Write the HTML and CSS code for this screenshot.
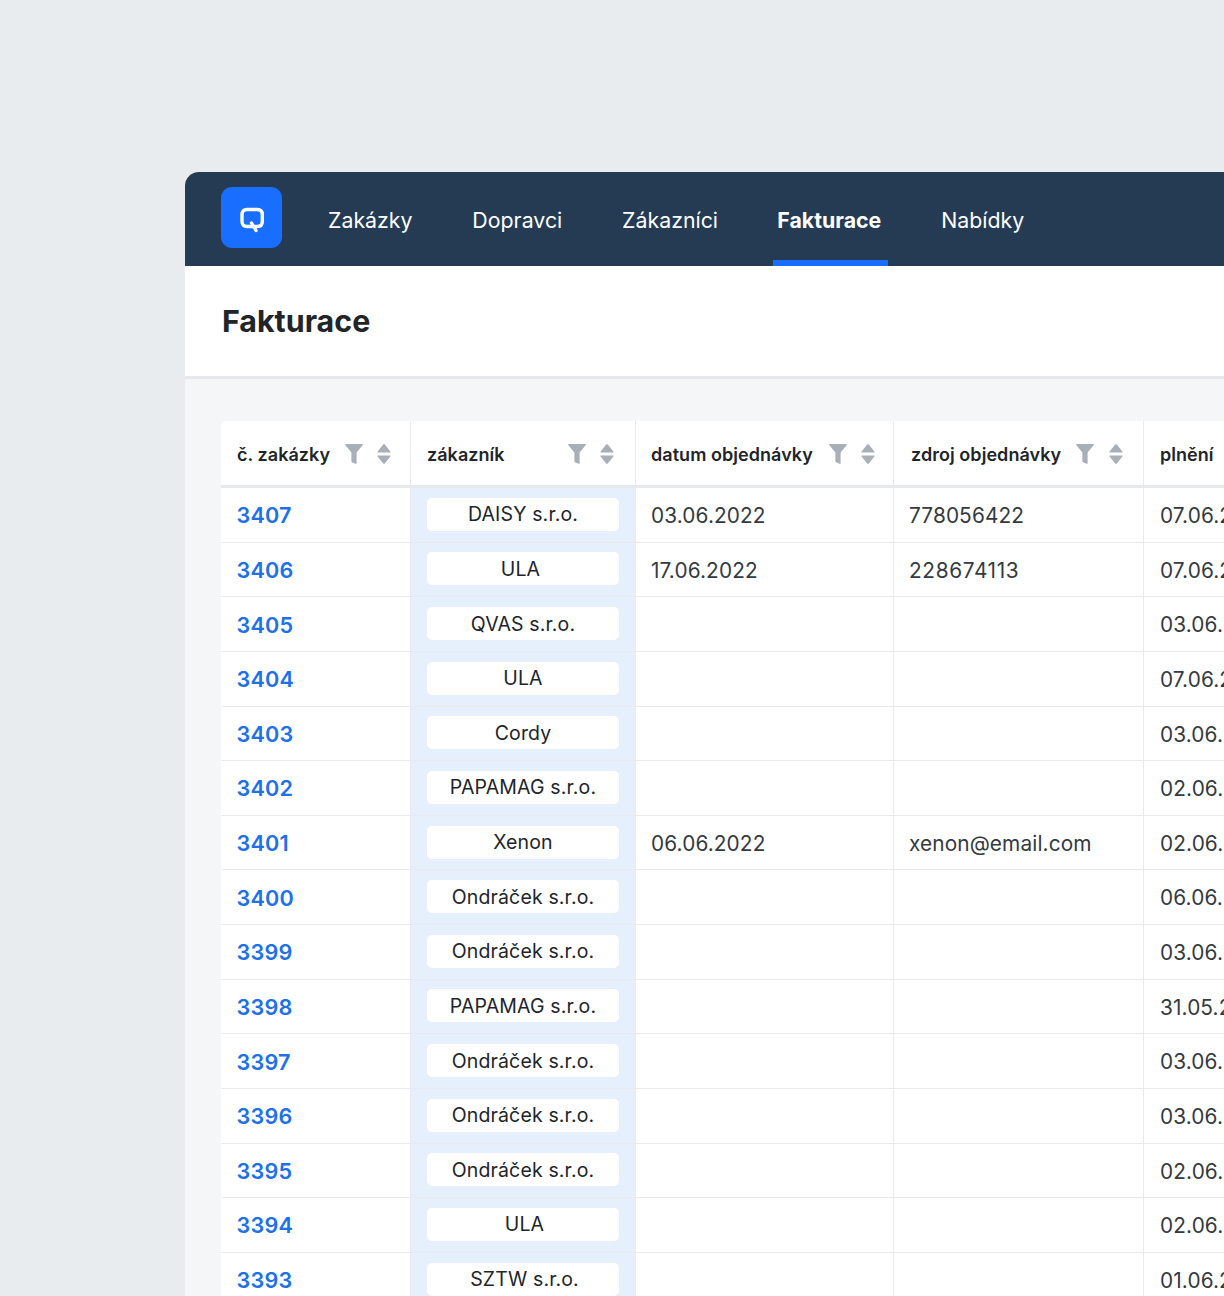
FILE: index.html
```html
<!DOCTYPE html>
<html lang="cs">
<head>
<meta charset="utf-8">
<title>Fakturace</title>
<link rel="stylesheet" href="styles.css">
</head>
<body>
<svg class="defs" width="0" height="0" aria-hidden="true">
  <symbol id="funnel" viewBox="0 0 18 20"><path d="M0.6 0H17.4C17.9 0 18.1 .5 17.8 .9L11.6 8.4V19.2C11.6 19.8 11.1 20 10.6 19.8L7 18.2C6.6 18 6.4 17.7 6.4 17.3V8.4L.2 .9C-.1 .5.1 0 .6 0Z"/></symbol>
  <symbol id="sort" viewBox="0 0 14 20"><path d="M6.2.5C6.6 0 7.4 0 7.8.5L13.4 7.4C13.8 7.9 13.5 8.5 12.9 8.5H1.1C.5 8.5.2 7.9.6 7.4Z"/><path d="M6.2 19.5C6.6 20 7.4 20 7.8 19.5L13.4 12.6C13.8 12.1 13.5 11.5 12.9 11.5H1.1C.5 11.5.2 12.1.6 12.6Z"/></symbol>
</svg>
<div class="shell">
  <nav class="nav">
    <div class="logo">
      <svg width="30" height="30" viewBox="0 0 30 30" fill="none" stroke="#fff" stroke-width="3.4" stroke-linejoin="round" stroke-linecap="round"><path d="M10 6.500H20.300C23.500 6.500 25.300 8.300 25.300 11.500V18.500C25.300 21.700 23.500 23.500 20.300 23.500H10C6.800 23.500 5 21.700 5 18.500V11.500C5 8.300 6.800 6.500 10 6.500Z"/><path d="M14.500 20L19 27.500"/></svg>
    </div>
    <a class="nav-item">Zakázky</a>
    <a class="nav-item">Dopravci</a>
    <a class="nav-item">Zákazníci</a>
    <a class="nav-item active">Fakturace</a>
    <a class="nav-item">Nabídky</a>
  </nav>
  <header class="page-head"><h1>Fakturace</h1></header>
  <main class="content">
    <div class="table">
      <div class="row head">
        <div class="cell c1"><span>č. zakázky</span><svg class="ic-f"><use href="#funnel"/></svg><svg class="ic-s"><use href="#sort"/></svg></div>
        <div class="cell c2"><span>zákazník</span><svg class="ic-f"><use href="#funnel"/></svg><svg class="ic-s"><use href="#sort"/></svg></div>
        <div class="cell c3"><span>datum objednávky</span><svg class="ic-f"><use href="#funnel"/></svg><svg class="ic-s"><use href="#sort"/></svg></div>
        <div class="cell c4"><span>zdroj objednávky</span><svg class="ic-f"><use href="#funnel"/></svg><svg class="ic-s"><use href="#sort"/></svg></div>
        <div class="cell c5"><span>plnění</span></div>
      </div>
      <div class="row"><div class="cell c1"><a class="id">3407</a></div><div class="cell c2"><span class="chip">DAISY s.r.o.</span></div><div class="cell c3">03.06.2022</div><div class="cell c4">778056422</div><div class="cell c5">07.06.2022</div></div>
      <div class="row"><div class="cell c1"><a class="id">3406</a></div><div class="cell c2"><span class="chip chip-left">ULA</span></div><div class="cell c3">17.06.2022</div><div class="cell c4 num-wide">228674113</div><div class="cell c5">07.06.2022</div></div>
      <div class="row"><div class="cell c1"><a class="id">3405</a></div><div class="cell c2"><span class="chip">QVAS s.r.o.</span></div><div class="cell c3"></div><div class="cell c4"></div><div class="cell c5">03.06.2022</div></div>
      <div class="row"><div class="cell c1"><a class="id">3404</a></div><div class="cell c2"><span class="chip">ULA</span></div><div class="cell c3"></div><div class="cell c4"></div><div class="cell c5">07.06.2022</div></div>
      <div class="row"><div class="cell c1"><a class="id">3403</a></div><div class="cell c2"><span class="chip">Cordy</span></div><div class="cell c3"></div><div class="cell c4"></div><div class="cell c5">03.06.2022</div></div>
      <div class="row"><div class="cell c1"><a class="id">3402</a></div><div class="cell c2"><span class="chip">PAPAMAG s.r.o.</span></div><div class="cell c3"></div><div class="cell c4"></div><div class="cell c5">02.06.2022</div></div>
      <div class="row"><div class="cell c1"><a class="id">3401</a></div><div class="cell c2"><span class="chip">Xenon</span></div><div class="cell c3">06.06.2022</div><div class="cell c4">xenon@email.com</div><div class="cell c5">02.06.2022</div></div>
      <div class="row"><div class="cell c1"><a class="id">3400</a></div><div class="cell c2"><span class="chip">Ondráček s.r.o.</span></div><div class="cell c3"></div><div class="cell c4"></div><div class="cell c5">06.06.2022</div></div>
      <div class="row"><div class="cell c1"><a class="id">3399</a></div><div class="cell c2"><span class="chip">Ondráček s.r.o.</span></div><div class="cell c3"></div><div class="cell c4"></div><div class="cell c5">03.06.2022</div></div>
      <div class="row"><div class="cell c1"><a class="id">3398</a></div><div class="cell c2"><span class="chip">PAPAMAG s.r.o.</span></div><div class="cell c3"></div><div class="cell c4"></div><div class="cell c5">31.05.2022</div></div>
      <div class="row"><div class="cell c1"><a class="id">3397</a></div><div class="cell c2"><span class="chip">Ondráček s.r.o.</span></div><div class="cell c3"></div><div class="cell c4"></div><div class="cell c5">03.06.2022</div></div>
      <div class="row"><div class="cell c1"><a class="id">3396</a></div><div class="cell c2"><span class="chip">Ondráček s.r.o.</span></div><div class="cell c3"></div><div class="cell c4"></div><div class="cell c5">03.06.2022</div></div>
      <div class="row"><div class="cell c1"><a class="id">3395</a></div><div class="cell c2"><span class="chip">Ondráček s.r.o.</span></div><div class="cell c3"></div><div class="cell c4"></div><div class="cell c5">02.06.2022</div></div>
      <div class="row"><div class="cell c1"><a class="id">3394</a></div><div class="cell c2"><span class="chip chip-right">ULA</span></div><div class="cell c3"></div><div class="cell c4"></div><div class="cell c5">02.06.2022</div></div>
      <div class="row"><div class="cell c1"><a class="id">3393</a></div><div class="cell c2"><span class="chip chip-right">SZTW s.r.o.</span></div><div class="cell c3"></div><div class="cell c4"></div><div class="cell c5">01.06.2022</div></div>
    </div>
  </main>
</div>
</body>
</html>
```
FILE: styles.css
```css
* { box-sizing: border-box; }
html, body { height: 100%; }
body {
  margin: 0;
  height: 1296px;
  overflow: hidden;
  background: #e9ecef;
  font-family: Inter, "Liberation Sans", sans-serif;
  color: #212529;
  padding: 172px 0 0 185px;
}
.defs { display: block; height: 0; }
.shell {
  width: 1300px;
  height: 1124px;
  border-top-left-radius: 14px;
  background: #f5f6f8;
  overflow: hidden;
}
.nav {
  height: 94px;
  background: #243b53;
  display: flex;
  align-items: stretch;
  padding-left: 36px;
}
.logo {
  width: 61px;
  height: 61px;
  margin-top: 15px;
  margin-right: 42px;
  border-radius: 11px;
  background: #1a6eff;
  display: flex;
  align-items: center;
  justify-content: center;
}
.nav-item {
  display: flex;
  align-items: center;
  padding: 4px 4px 0;
  margin-right: 51.8px;
  font-size: 21.3px;
  line-height: 1;
  color: #fff;
  letter-spacing: 0.02px;
}
.nav-item.active {
  font-weight: 700;
  letter-spacing: 0;
  border-bottom: 6px solid #1a6eff;
  padding: 10px 7px 0 4px;
  margin-left: -0.5px;
  margin-right: 49px;
}
.page-head {
  height: 113px;
  background: #fff;
  border-bottom: 3px solid #e6e8ec;
  padding: 0 0 0 37px;
  display: flex;
  align-items: center;
}
.page-head h1 {
  margin: 0;
  font-size: 30.4px;
  font-weight: 700;
  line-height: 1;
  color: #212529;
}
.content { padding: 42px 0 0 36px; }
.table {
  width: 1100px;
  background: #fff;
  border-radius: 6px 0 0 0;
  overflow: hidden;
}
.row {
  display: grid;
  grid-template-columns: 190px 225px 258px 250px 1fr;
  height: 54.64px;
  border-bottom: 1.5px solid #e8eaed;
}
.row.head {
  height: 67px;
  border-bottom: 3px solid #e6e8ec;
}
.cell {
  display: flex;
  align-items: center;
  padding-left: 15px;
  padding-top: 1.5px;
  font-size: 20.8px;
  color: #343a40;
  letter-spacing: 0.12px;
  white-space: nowrap;
  overflow: hidden;
  border-right: 1.5px solid #e8eaed;
}
.cell.c1 { padding-left: 15.5px; padding-top: 1px; }
.cell.c5 { border-right: 0; padding-left: 16px; }
.cell.num-wide { letter-spacing: 0.65px; }
.row .c2 {
  background: #e6effc;
  padding: 0 15px 0 16px;
  border-right-color: #e8eaed;
}
.row.head .cell {
  background: #fff;
  font-size: 18px;
  font-weight: 600;
  color: #212529;
  letter-spacing: 0.05px;
  padding-top: 2px;
}
.row.head .c1 { padding-left: 16px; padding-right: 19px; }
.row.head .c2 { padding-left: 16px; padding-right: 21px; }
.row.head .c3 { padding-left: 15px; padding-right: 18px; }
.row.head .c4 { padding-left: 17px; padding-right: 20px; }
.ic-f { width: 18px; height: 20px; margin-left: auto; fill: #a8afb7; flex: none; }
.ic-s { width: 14px; height: 20px; margin-left: 14px; fill: #a8afb7; flex: none; }
.row.head .c4 .ic-s { margin-left: 15px; }
.id {
  font-size: 21.6px;
  font-weight: 600;
  color: #2070e8;
  letter-spacing: 0.2px;
}
.chip {
  display: flex;
  align-items: center;
  justify-content: center;
  width: 192px;
  height: 33px;
  margin-top: -1px;
  background: #fff;
  border-radius: 5px;
  font-size: 19.5px;
  color: #212529;
  letter-spacing: 0.15px;
}
.chip-left { padding-right: 5px; }
.chip-right { padding-left: 3px; }
```
